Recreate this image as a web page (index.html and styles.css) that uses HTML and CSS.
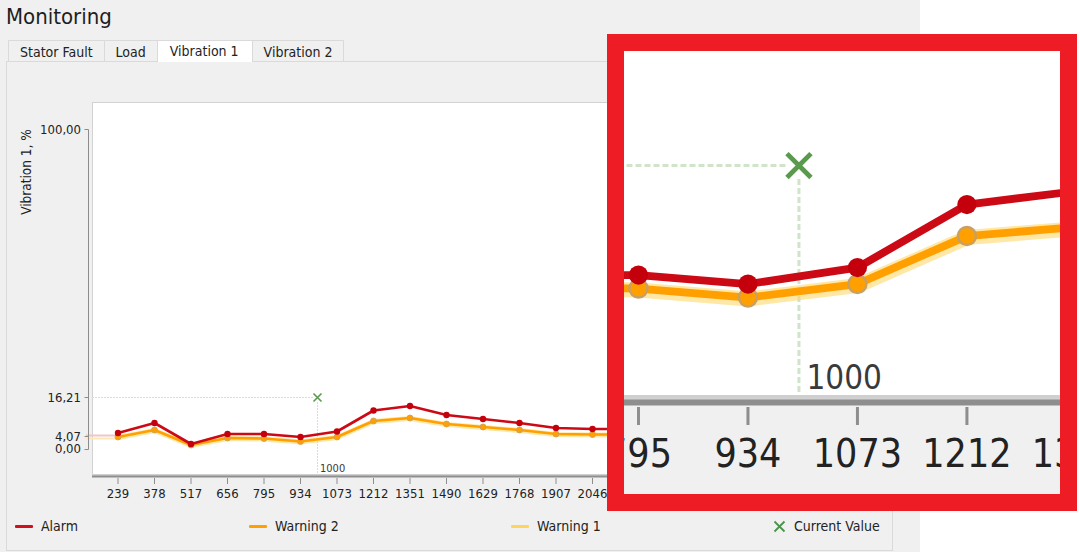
FILE: index.html
```html
<!DOCTYPE html>
<html lang="en">
<head>
    <meta charset="UTF-8">
    <title>Monitoring</title>
    <link rel="stylesheet" href="styles.css">
</head>
<body>
    <div class="window">
        <h1 class="title">Monitoring</h1>
        <div class="tabs">
            <div class="tab">Stator Fault</div>
            <div class="tab">Load</div>
            <div class="tab active">Vibration 1</div>
            <div class="tab">Vibration 2</div>
        </div>
        <div class="pane">
            <svg class="chart" width="885" height="443" viewBox="7 62 885 443">
                <defs>
                    <marker id="dot-red" markerUnits="userSpaceOnUse" viewBox="0 0 8 8" markerWidth="8" markerHeight="8" refX="4" refY="4">
                        <circle cx="4" cy="4" r="3.2" fill="#c4000c"/>
                    </marker>
                    <marker id="dot-orange" markerUnits="userSpaceOnUse" viewBox="0 0 8 8" markerWidth="8" markerHeight="8" refX="4" refY="4">
                        <circle cx="4" cy="4" r="3" fill="#ffa000" stroke="#c8a064" stroke-width="0.8"/>
                    </marker>
                </defs>
                <g id="plot">
                    <rect class="plot-bg" x="92.5" y="102.5" width="788" height="373"/>

                    <!-- level lines left of the first sample -->
                    <path class="faint-alarm" d="M86 435.5H118"/>
                    <path class="faint-warn" d="M86 438.5H118"/>

                    <!-- current value guides -->
                    <path class="guide" d="M92 397.5H313 M317.5 402V475"/>

                    <!-- y axis -->
                    <path class="y-axis" d="M84.5 129.5H88.5V449.5H84.5 M84.5 397.5H88.5 M84.5 436.5H88.5"/>
                    <g class="y-labels">
                        <text x="81" y="134">100,00</text>
                        <text x="81" y="402">16,21</text>
                        <text x="81" y="441">4,07</text>
                        <text x="81" y="453">0,00</text>
                    </g>
                    <text class="y-title" transform="rotate(-90)" x="-172" y="31">Vibration 1, %</text>

                    <!-- x axis -->
                    <path class="x-axis-light" d="M92 474.5H880"/>
                    <path class="x-axis" d="M92 476.5H880"/>
                    <path class="x-ticks" d="M118 478V484 M154.5 478V484 M191 478V484 M227.5 478V484 M264 478V484 M300.5 478V484 M337 478V484 M373.5 478V484 M410 478V484 M446.5 478V484 M483 478V484 M519.5 478V484 M556 478V484 M592.5 478V484 M629 478V484 M665.5 478V484 M702 478V484 M738.5 478V484 M775 478V484 M811.5 478V484 M848 478V484"/>
                    <g class="x-labels">
                        <text x="118" y="498">239</text>
                        <text x="154.5" y="498">378</text>
                        <text x="191" y="498">517</text>
                        <text x="227.5" y="498">656</text>
                        <text x="264" y="498">795</text>
                        <text x="300.5" y="498">934</text>
                        <text x="337" y="498">1073</text>
                        <text x="373.5" y="498">1212</text>
                        <text x="410" y="498">1351</text>
                        <text x="446.5" y="498">1490</text>
                        <text x="483" y="498">1629</text>
                        <text x="519.5" y="498">1768</text>
                        <text x="556" y="498">1907</text>
                        <text x="592.5" y="498">2046</text>
                        <text x="629" y="498">2185</text>
                        <text x="665.5" y="498">2324</text>
                        <text x="702" y="498">2463</text>
                        <text x="738.5" y="498">2602</text>
                        <text x="775" y="498">2741</text>
                        <text x="811.5" y="498">2880</text>
                        <text x="848" y="498">3019</text>
                    </g>

                    <!-- series -->
                    <polyline class="warning1" points="118,437.5 154.5,430.5 191,445.5 227.5,438.5 264,439 300.5,442 337,437.5 373.5,421.5 410,418.5 446.5,424.5 483,427.5 519.5,430.5 556,434.5 592.5,435 629,435 665.5,433.5 702,432.5 738.5,432.5 775,431.5 811.5,431.5 848,431.5"/>
                    <polyline class="warning2" points="118,437 154.5,430 191,445 227.5,438 264,438.5 300.5,441.5 337,437 373.5,421 410,418 446.5,424 483,427 519.5,430 556,434 592.5,434.5 629,434.5 665.5,433 702,432 738.5,432 775,431 811.5,431 848,431"/>
                    <polyline class="alarm" points="118,433 154.5,423 191,444 227.5,434 264,434 300.5,437 337,431.5 373.5,410.5 410,406 446.5,415 483,419 519.5,423 556,428 592.5,429 629,429 665.5,427 702,426 738.5,426 775,425 811.5,425 848,425"/>

                    <!-- current value -->
                    <path class="current" d="M313.5 393.5l8 8m0 -8l-8 8"/>
                    <text class="value-label" x="320" y="472">1000</text>
                </g>
            </svg>
            <div class="legend">
                <div class="legend-item"><span class="swatch alarm-swatch"></span>Alarm</div>
                <div class="legend-item"><span class="swatch warning2-swatch"></span>Warning 2</div>
                <div class="legend-item"><span class="swatch warning1-swatch"></span>Warning 1</div>
                <div class="legend-item">
                    <svg class="cross" width="13" height="13" viewBox="0 0 13 13"><path d="M1.5 1.5l10 10m0 -10l-10 10"/></svg>
                    Current Value
                </div>
            </div>
        </div>
    </div>

    <div class="magnifier">
        <svg width="436" height="443" viewBox="259.2 359.3 145.3 147.7">
            <use href="#plot"/>
        </svg>
    </div>
</body>
</html>
```

FILE: styles.css
```css
body {
    margin: 0;
    background: #fff;
    font-family: "DejaVu Sans Condensed", "DejaVu Sans", sans-serif;
    font-stretch: condensed;
    color: #1e1e1e;
}
.window {
    width: 920px;
    height: 552px;
    padding-top: 4px;
    box-sizing: border-box;
    background: #f0f0f0;
}
.title {
    margin: 0 0 0 6px;
    font-size: 22px;
    font-weight: normal;
    line-height: 26px;
    height: 26px;
}
.tabs {
    display: flex;
    margin: 10px 0 -1px 8px;
    height: 22px;
    position: relative;
    z-index: 1;
}
.tab {
    box-sizing: border-box;
    height: 21px;
    padding: 2px 11px 0;
    line-height: 19px;
    font-size: 14px;
    color: #222;
    border: 1px solid #dadada;
    border-bottom: none;
    margin-right: -1px;
    background: #f0f0f0;
}
.tab.active {
    height: 22px;
    padding: 1px 13px 0 12px;
    background: #fff;
}
.pane {
    margin-left: 6px;
    width: 887px;
    height: 490px;
    box-sizing: border-box;
    border: 1px solid #dadada;
}
.chart {
    display: block;
}
.plot-bg {
    fill: #fff;
    stroke: #d2d2d2;
    stroke-width: 1;
}
.faint-alarm {
    stroke: #f3c4c4;
    stroke-width: 2;
}
.faint-warn {
    stroke: #fde6b8;
    stroke-width: 2;
}
.guide {
    fill: none;
    stroke: #cfe4c8;
    stroke-width: 1;
    stroke-dasharray: 2 1;
}
.y-axis {
    fill: none;
    stroke: #8c8c8c;
    stroke-width: 1;
}
.y-labels text {
    font-size: 13px;
    fill: #222;
    text-anchor: end;
}
.y-title {
    font-size: 13.5px;
    fill: #222;
    text-anchor: middle;
}
.x-axis-light {
    stroke: #cfcfcf;
    stroke-width: 1;
}
.x-axis {
    stroke: #8e8e8e;
    stroke-width: 2;
}
.x-ticks {
    stroke: #8e8e8e;
    stroke-width: 1;
}
.x-labels text {
    font-size: 13px;
    fill: #222;
    text-anchor: middle;
}
.warning1 {
    fill: none;
    stroke: #ffd76a;
    stroke-width: 5;
    stroke-opacity: 0.6;
    stroke-linejoin: round;
}
.warning2 {
    fill: none;
    stroke: #ff9f00;
    stroke-width: 2.6;
    stroke-linejoin: round;
    marker-start: url(#dot-orange);
    marker-mid: url(#dot-orange);
    marker-end: url(#dot-orange);
}
.alarm {
    fill: none;
    stroke: #cc0a16;
    stroke-width: 2.6;
    stroke-linejoin: round;
    marker-start: url(#dot-red);
    marker-mid: url(#dot-red);
    marker-end: url(#dot-red);
}
.current {
    fill: none;
    stroke: #5a9a4c;
    stroke-width: 1.6;
}
.value-label {
    font-size: 11px;
    fill: #3a3a3a;
}
.legend {
    display: grid;
    grid-template-columns: 234px 262px 262px auto;
    align-items: center;
    height: 42px;
    padding-left: 8px;
}
.legend-item {
    display: flex;
    align-items: center;
    gap: 8px;
    font-size: 14px;
    color: #222;
}
.swatch {
    width: 18px;
    height: 3px;
    border-radius: 1px;
}
.alarm-swatch {
    background: #d0101c;
}
.warning2-swatch {
    background: #ffa000;
}
.warning1-swatch {
    background: #ffd45c;
}
.cross path {
    fill: none;
    stroke: #4a944a;
    stroke-width: 1.8;
}
.magnifier {
    position: absolute;
    left: 607px;
    top: 34px;
    width: 470px;
    height: 477px;
    box-sizing: border-box;
    border: 17px solid #ee1d25;
    background: #f0f0f0;
    overflow: hidden;
}
.magnifier svg {
    display: block;
}
```
